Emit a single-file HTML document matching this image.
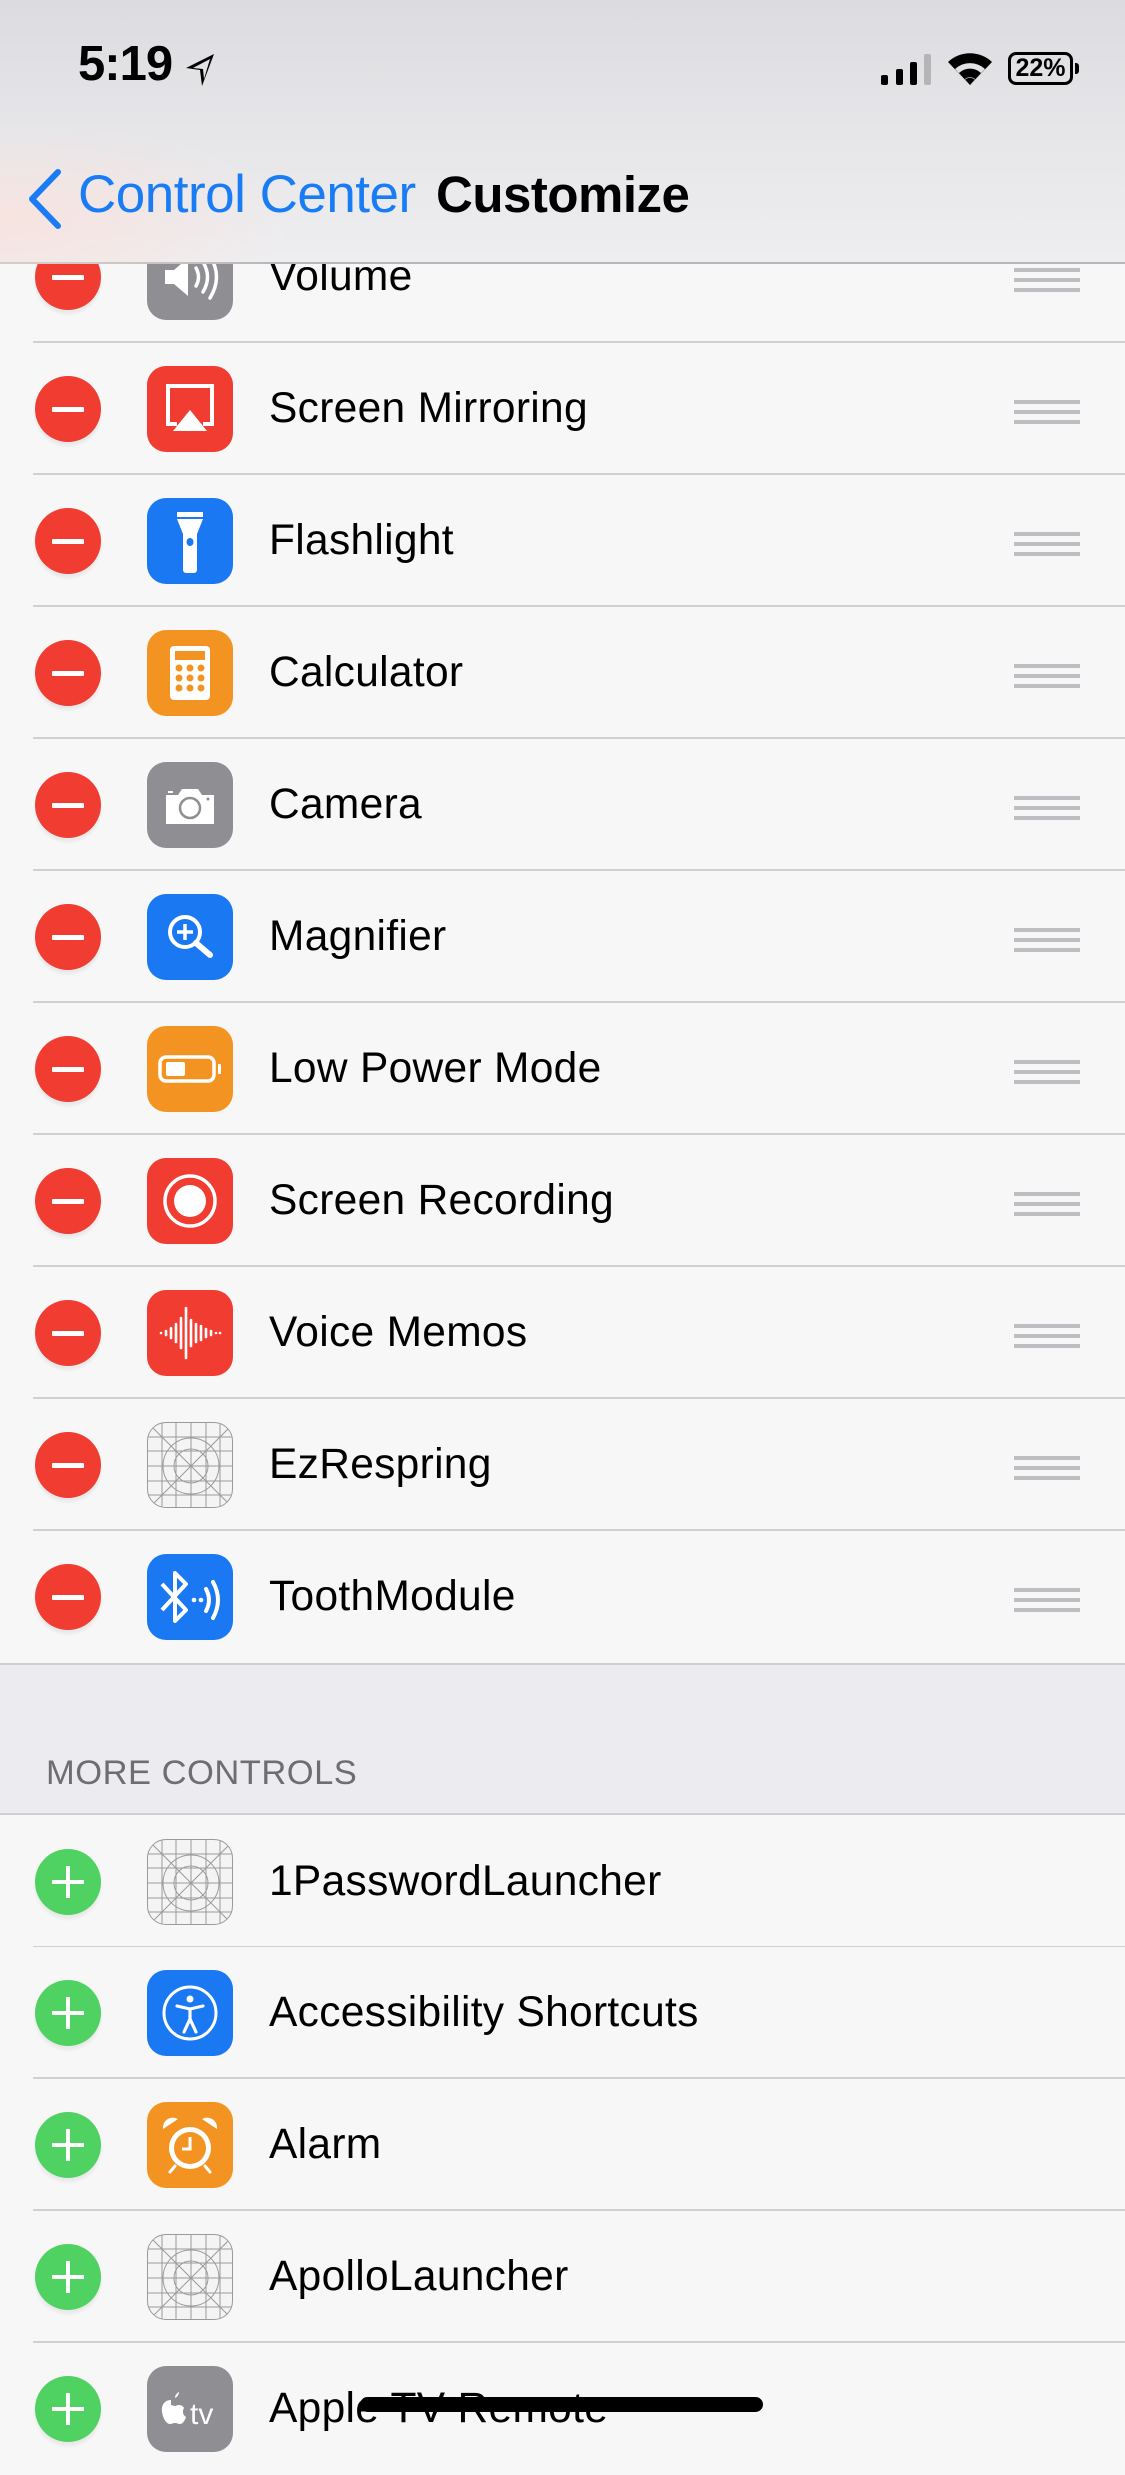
<!DOCTYPE html>
<html><head><meta charset="utf-8">
<style>
*{margin:0;padding:0;box-sizing:border-box}
body{width:1125px;height:2436px;overflow:hidden;background:#f7f7f7;font-family:"Liberation Sans",sans-serif;position:relative}
.row{position:absolute;left:0;width:1125px;height:132px;background:#f7f7f7}
.sep{position:absolute;left:33px;right:0;bottom:0;height:2px;background:#d0d0d4}
.btn{position:absolute;left:35px;top:33px;width:66px;height:66px;border-radius:50%;box-shadow:0 4px 3px rgba(0,0,0,0.06)}
.minus{background:#f13c31}
.minus:after{content:"";position:absolute;left:17px;top:31px;width:32px;height:5px;background:#fff;border-radius:1px}
.plus{background:#4fd262}
.plus:before{content:"";position:absolute;left:17px;top:31px;width:32px;height:4px;background:#fff}
.plus:after{content:"";position:absolute;left:31px;top:17px;width:4px;height:32px;background:#fff}
.ic{position:absolute;left:147px;top:23px;width:86px;height:86px;border-radius:19px;overflow:hidden}
.ic svg{width:86px;height:86px;display:block}
.lbl{position:absolute;left:269px;top:0;line-height:132px;font-size:42.5px;color:#000;letter-spacing:0.3px}
.grip{position:absolute;left:1014px;top:57px;width:66px;height:4px;background:#bdbdc2;box-shadow:0 10px 0 #bdbdc2,0 20px 0 #bdbdc2}
.nav{position:absolute;left:0;top:0;width:1125px;height:264px;background:linear-gradient(180deg,#dcdce0 0%,#e6e6e9 50%,#eeeef0 100%);border-bottom:2px solid #b8b8bc;z-index:5}
.nav:before{content:"";position:absolute;left:0;top:120px;width:300px;height:144px;background:radial-gradient(ellipse at 0% 70%,rgba(250,225,220,0.8),rgba(250,225,220,0) 70%)}
</style></head><body>

<div class="nav">
  <div style="position:absolute;left:78px;top:36px;font-size:49px;font-weight:600;color:#000;letter-spacing:-1px">5:19</div>
  <svg style="position:absolute;left:184px;top:52px" width="32" height="36" viewBox="0 0 32 36"><path d="M30 2 L2 16 L16 18 L18 34 Z" fill="#000"/><path d="M26 7 L9 16 L19 17 L20 27 Z" fill="#e2e2e5"/></svg>
  <div style="position:absolute;left:881px;top:75px;width:7px;height:10px;background:#000;border-radius:2px"></div>
  <div style="position:absolute;left:896px;top:69px;width:7px;height:16px;background:#000;border-radius:2px"></div>
  <div style="position:absolute;left:910px;top:62px;width:7px;height:23px;background:#000;border-radius:2px"></div>
  <div style="position:absolute;left:924px;top:54px;width:7px;height:31px;background:#b5b5b8;border-radius:2px"></div>
  <svg style="position:absolute;left:946px;top:50px" width="48" height="36" viewBox="0 0 48 36"><path d="M24 35 L2 12 A32 32 0 0 1 46 12 Z" fill="#000"/><path d="M24 35 L9 19 A22 22 0 0 1 39 19 Z" fill="#e2e2e5"/><path d="M24 35 L13 23 A16 16 0 0 1 35 23 Z" fill="#000"/><path d="M24 35 L19 29 A8 8 0 0 1 29 29 Z" fill="#e2e2e5"/><path d="M24 35 L19.5 29.5 A7 7 0 0 1 28.5 29.5 Z" fill="#000"/></svg>
  <div style="position:absolute;left:1008px;top:52px;width:65px;height:33px;border:3px solid #000;border-radius:8px;font-size:25px;font-weight:600;line-height:27px;text-align:center;color:#000">22%</div>
  <div style="position:absolute;left:1075px;top:63px;width:4px;height:11px;background:#000;border-radius:0 3px 3px 0"></div>
  <svg style="position:absolute;left:26px;top:168px" width="38" height="62" viewBox="0 0 38 62"><path d="M32 4 L6 31 L32 58" fill="none" stroke="#1a7cf5" stroke-width="6" stroke-linecap="round" stroke-linejoin="round"/></svg>
  <div style="position:absolute;left:78px;top:164px;font-size:53px;color:#1a7cf5;letter-spacing:-0.5px">Control Center</div>
  <div style="position:absolute;left:436px;top:165px;font-size:51px;font-weight:700;color:#000;letter-spacing:-0.5px">Customize</div>
</div>

<div class="row" style="top:211px"><div class="btn minus"></div><div class="ic" style="background:#8e8e93"><svg viewBox="0 0 86 86"><path d="M18 36h9l14-12v38l-14-12h-9z" fill="#fff"/><path d="M49 34q5 9 0 18M56 28q9 15 0 30M63 22q13 21 0 42" fill="none" stroke="#fff" stroke-width="3.5" stroke-linecap="round"/></svg></div><div class="lbl">Volume</div><div class="grip"></div><div class="sep"></div></div>
<div class="row" style="top:343px"><div class="btn minus"></div><div class="ic" style="background:#f13c31"><svg viewBox="0 0 86 86"><path d="M30 58h-9v-38h44v38h-9" fill="none" stroke="#fff" stroke-width="4"/><path d="M43 44l17 21h-34z" fill="#fff"/></svg></div><div class="lbl">Screen Mirroring</div><div class="grip"></div><div class="sep"></div></div>
<div class="row" style="top:475px"><div class="btn minus"></div><div class="ic" style="background:#1a78f2"><svg viewBox="0 0 86 86"><rect x="30" y="14" width="26" height="5" fill="#fff"/><path d="M30 21h26l-6 15v36a3 3 0 0 1-3 3h-8a3 3 0 0 1-3-3V36z" fill="#fff"/><ellipse cx="43" cy="44" rx="3.5" ry="4" fill="#1a78f2"/></svg></div><div class="lbl">Flashlight</div><div class="grip"></div><div class="sep"></div></div>
<div class="row" style="top:607px"><div class="btn minus"></div><div class="ic" style="background:#f39422"><svg viewBox="0 0 86 86"><rect x="23" y="16" width="40" height="54" rx="4" fill="#fff"/><rect x="28" y="21" width="30" height="9" fill="#f39422"/><g fill="#f39422"><circle cx="32" cy="38" r="3.5"/><circle cx="43" cy="38" r="3.5"/><circle cx="54" cy="38" r="3.5"/><circle cx="32" cy="48" r="3.5"/><circle cx="43" cy="48" r="3.5"/><circle cx="54" cy="48" r="3.5"/><circle cx="32" cy="58" r="3.5"/><circle cx="43" cy="58" r="3.5"/><circle cx="54" cy="58" r="3.5"/></g></svg></div><div class="lbl">Calculator</div><div class="grip"></div><div class="sep"></div></div>
<div class="row" style="top:739px"><div class="btn minus"></div><div class="ic" style="background:#8e8e93"><svg viewBox="0 0 86 86"><path d="M19 33h12l4-6h16l4 6h12v29H19z" fill="#fff"/><rect x="21" y="29" width="5" height="2" fill="#fff"/><circle cx="43" cy="46" r="10" fill="none" stroke="#8e8e93" stroke-width="2.5"/><circle cx="61" cy="37" r="1.5" fill="#8e8e93"/></svg></div><div class="lbl">Camera</div><div class="grip"></div><div class="sep"></div></div>
<div class="row" style="top:871px"><div class="btn minus"></div><div class="ic" style="background:#1a78f2"><svg viewBox="0 0 86 86"><circle cx="38" cy="38" r="15" fill="none" stroke="#fff" stroke-width="4"/><path d="M30 38h16M38 30v16" stroke="#fff" stroke-width="3.5"/><path d="M49 49l14 12" stroke="#fff" stroke-width="6" stroke-linecap="round"/></svg></div><div class="lbl">Magnifier</div><div class="grip"></div><div class="sep"></div></div>
<div class="row" style="top:1003px"><div class="btn minus"></div><div class="ic" style="background:#f39422"><svg viewBox="0 0 86 86"><rect x="13" y="31" width="54" height="24" rx="6" fill="none" stroke="#fff" stroke-width="3.5"/><rect x="19" y="36" width="19" height="14" rx="2" fill="#fff"/><path d="M71 38h2a1 1 0 0 1 1 1v8a1 1 0 0 1-1 1h-2z" fill="#fff"/></svg></div><div class="lbl">Low Power Mode</div><div class="grip"></div><div class="sep"></div></div>
<div class="row" style="top:1135px"><div class="btn minus"></div><div class="ic" style="background:#f13c31"><svg viewBox="0 0 86 86"><circle cx="43" cy="43" r="25" fill="none" stroke="#fff" stroke-width="3.5"/><circle cx="43" cy="43" r="16" fill="#fff"/></svg></div><div class="lbl">Screen Recording</div><div class="grip"></div><div class="sep"></div></div>
<div class="row" style="top:1267px"><div class="btn minus"></div><div class="ic" style="background:#f13c31"><svg viewBox="0 0 86 86"><g stroke="#fff" stroke-width="2.6" stroke-linecap="round"><path d="M14 43v0M19 41v4M24 38v10M29 34v18M34 28v30M39 18v50M44 30v26M49 34v18M54 36v14M59 39v8M64 41v4M69 43v0M73 43v0"/></g></svg></div><div class="lbl">Voice Memos</div><div class="grip"></div><div class="sep"></div></div>
<div class="row" style="top:1399px"><div class="btn minus"></div><div class="ic" style="background:#f4f4f4;border:1.5px solid #9a9a9a"><svg viewBox="0 0 86 86"><g fill="none" stroke="#9a9a9a" stroke-width="1"><path d="M0 0L86 86M86 0L0 86M28 0v86M43 0v86M58 0v86M0 28h86M0 43h86M0 58h86M14 0v86M72 0v86M0 14h86M0 72h86"/><circle cx="43" cy="43" r="28"/><circle cx="43" cy="43" r="17"/></g></svg></div><div class="lbl">EzRespring</div><div class="grip"></div><div class="sep"></div></div>
<div class="row" style="top:1531px"><div class="btn minus"></div><div class="ic" style="background:#1a78f2"><svg viewBox="0 0 86 86"><path d="M15 30l24 26-11 11V19l11 11-24 26" fill="none" stroke="#fff" stroke-width="4" stroke-linejoin="round"/><circle cx="47" cy="46" r="2.3" fill="#fff"/><circle cx="54" cy="46" r="2.3" fill="#fff"/><path d="M59 35q6 11 0 22M66 28q10 18 0 36" fill="none" stroke="#fff" stroke-width="4" stroke-linecap="round"/></svg></div><div class="lbl">ToothModule</div><div class="grip"></div></div>

<div style="position:absolute;left:0;top:1663px;width:1125px;height:152px;background:#ebebf0;border-top:2px solid #cfcfd3;border-bottom:2px solid #cfcfd3"></div>
<div style="position:absolute;left:46px;top:1754px;font-size:34.5px;color:#6d6d72;letter-spacing:0.5px">MORE CONTROLS</div>

<div class="row" style="top:1816px"><div class="btn plus"></div><div class="ic" style="background:#f4f4f4;border:1.5px solid #9a9a9a"><svg viewBox="0 0 86 86"><g fill="none" stroke="#9a9a9a" stroke-width="1"><path d="M0 0L86 86M86 0L0 86M28 0v86M43 0v86M58 0v86M0 28h86M0 43h86M0 58h86M14 0v86M72 0v86M0 14h86M0 72h86"/><circle cx="43" cy="43" r="28"/><circle cx="43" cy="43" r="17"/></g></svg></div><div class="lbl">1PasswordLauncher</div><div class="sep"></div></div>
<div class="row" style="top:1947px"><div class="btn plus"></div><div class="ic" style="background:#1a78f2"><svg viewBox="0 0 86 86"><circle cx="43" cy="43" r="26" fill="none" stroke="#fff" stroke-width="3"/><circle cx="43" cy="29" r="3.5" fill="#fff"/><path d="M30 36l13 3 13-3M43 39v10l-6 13M43 49l6 13" fill="none" stroke="#fff" stroke-width="3.2" stroke-linecap="round" stroke-linejoin="round"/></svg></div><div class="lbl">Accessibility Shortcuts</div><div class="sep"></div></div>
<div class="row" style="top:2079px"><div class="btn plus"></div><div class="ic" style="background:#f39422"><svg viewBox="0 0 86 86"><circle cx="43" cy="46" r="21" fill="#fff"/><circle cx="43" cy="46" r="16" fill="#f39422"/><path d="M43 35v12h-8" fill="none" stroke="#fff" stroke-width="3"/><path d="M16 27a10 10 0 0 1 15-10zM70 27a10 10 0 0 0-15-10z" fill="#fff"/><path d="M28 64l-5 6M58 64l5 6" stroke="#fff" stroke-width="3" stroke-linecap="round"/></svg></div><div class="lbl">Alarm</div><div class="sep"></div></div>
<div class="row" style="top:2211px"><div class="btn plus"></div><div class="ic" style="background:#f4f4f4;border:1.5px solid #9a9a9a"><svg viewBox="0 0 86 86"><g fill="none" stroke="#9a9a9a" stroke-width="1"><path d="M0 0L86 86M86 0L0 86M28 0v86M43 0v86M58 0v86M0 28h86M0 43h86M0 58h86M14 0v86M72 0v86M0 14h86M0 72h86"/><circle cx="43" cy="43" r="28"/><circle cx="43" cy="43" r="17"/></g></svg></div><div class="lbl">ApolloLauncher</div><div class="sep"></div></div>
<div class="row" style="top:2343px"><div class="btn plus"></div><div class="ic" style="background:#8e8e93"><svg viewBox="0 0 86 86"><path d="M24 34c-7 0-10 6-9 12 1 6 4 12 8 12 2 0 3-1 5-1s3 1 5 1c3 0 5-4 6-7-3-2-4-5-2-9-1-2-3-3-5-3-2 0-3 1-4 1s-3-1-4-1zM28 32c0-3 2-5 4-6 0 3-2 5-4 6z" fill="#fff"/><text x="43" y="58" font-family="Liberation Sans,sans-serif" font-size="30" fill="#fff">tv</text></svg></div><div class="lbl">Apple TV Remote</div></div>

<div style="position:absolute;left:360px;top:2397px;width:403px;height:15px;background:#000;border-radius:8px;z-index:6"></div>
</body></html>
